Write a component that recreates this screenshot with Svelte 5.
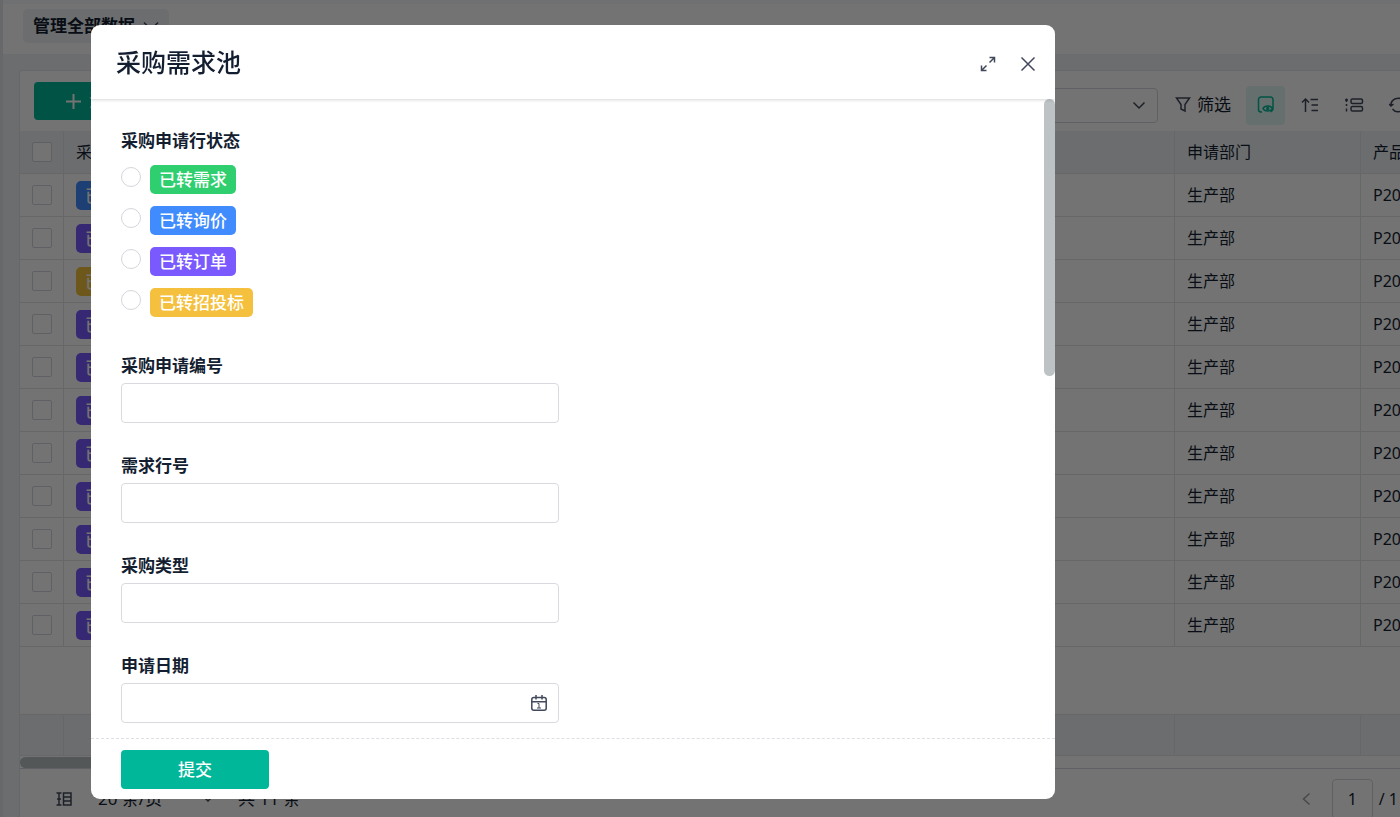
<script lang="ts">
	const statuses = [
		{ value: 'demand', label: '已转需求', color: '#2fcf6f' },
		{ value: 'inquiry', label: '已转询价', color: '#408cff' },
		{ value: 'order', label: '已转订单', color: '#7a5aff' },
		{ value: 'bidding', label: '已转招投标', color: '#f4c03d' }
	];

	const rowStatuses = [1, 2, 3, 2, 2, 2, 2, 2, 2, 2, 2];
	const rows = rowStatuses.map((s, i) => ({ id: i + 1, status: statuses[s] }));

	const fields = [
		{ id: 'request-no', label: '采购申请编号' },
		{ id: 'line-no', label: '需求行号' },
		{ id: 'type', label: '采购类型' }
	];

	let status = $state('');
	let page = $state('1');
</script>

<svelte:head>
	<title>采购需求池</title>
</svelte:head>

<div class="page">
	<header class="topbar">
		<button class="view-switch">
			管理全部数据
			<svg width="16" height="10" viewBox="0 0 16 10"><path d="M1 1.500l7 7 7-7" /></svg>
		</button>
	</header>

	<main>
		<section class="card">
			<div class="toolbar">
				<button class="add">
					<svg width="17" height="17" viewBox="0 0 17 17"><path d="M8.500 1v15M1 8.500h15" /></svg>
					添加
				</button>
				<div class="tools">
					<button class="search-field" aria-label="搜索字段">
						<svg width="14" height="9" viewBox="0 0 14 9"><path d="M1.500 1.500l5.500 5.500 5.500-5.500" /></svg>
					</button>
					<button class="filter">
						<svg width="16" height="18" viewBox="0 0 16 18"><path d="M1.500 2h13L10 8.500V15l-4-2V8.500z" /></svg>
						筛选
					</button>
					<button class="tool active" aria-label="显示字段">
						<svg width="18" height="18" viewBox="0 0 18 18">
							<path d="M5 16H4a2.500 2.500 0 0 1-2.500-2.500v-10A2.500 2.500 0 0 1 4 1h9.500A2.500 2.500 0 0 1 16 3.500V12a4 4 0 0 1-2.500 3.700" />
							<path d="M6 12.500c1.500-3.400 7.500-3.400 9.500 0-2 3.400-8 3.400-9.500 0z" />
							<circle cx="10.700" cy="12.500" r="0.900" />
						</svg>
					</button>
					<button class="tool" aria-label="排序">
						<svg width="18" height="18" viewBox="0 0 18 18"><path d="M4.500 16V3M1 6.500L4.500 3 8 6.500M9.500 3.500H17M10.500 9H17M10.500 14.500H17" /></svg>
					</button>
					<button class="tool" aria-label="行高">
						<svg width="20" height="18" viewBox="0 0 20 18">
							<rect x="7" y="3" width="11.500" height="4.500" rx="1.500" />
							<rect x="7" y="10.500" width="11.500" height="4.500" rx="1.500" />
							<path d="M2.500 2.500v3.500M1 4h3M2.500 8v2M2.500 12.500v3" />
						</svg>
					</button>
					<button class="tool" aria-label="刷新">
						<svg width="18" height="18" viewBox="0 0 18 18"><path d="M2 10a7 7 0 0 1 12.500-5M16 8a7 7 0 0 1-12.500 5M0 8l2 2 2.500-2M18 10l-2-2-2.500 2" /></svg>
					</button>
				</div>
			</div>

			<div class="table-wrap">
				<table>
					<colgroup>
						<col class="c-check" />
						<col class="c-std" />
						<col class="c-std" />
						<col class="c-std" />
						<col class="c-std" />
						<col class="c-date" />
						<col class="c-dept" />
						<col class="c-product" />
					</colgroup>
					<thead>
						<tr>
							<th><input type="checkbox" aria-label="全选" /></th>
							<th>采购申请行状态</th>
							<th></th>
							<th></th>
							<th></th>
							<th></th>
							<th>申请部门</th>
							<th>产品编号</th>
						</tr>
					</thead>
					<tbody>
						{#each rows as row (row.id)}
							<tr>
								<td><input type="checkbox" aria-label="选择第 {row.id} 行" /></td>
								<td><span class="tag" style="background: {row.status.color}">{row.status.label}</span></td>
								<td></td>
								<td></td>
								<td></td>
								<td></td>
								<td>生产部</td>
								<td>P20</td>
							</tr>
						{/each}
						<tr class="blank"><td colspan="8"></td></tr>
					</tbody>
					<tfoot>
						<tr>
							{#each Array(8) as _}
								<td></td>
							{/each}
						</tr>
					</tfoot>
				</table>
			</div>
			<div class="h-scroll"><div class="h-thumb"></div></div>

			<footer class="pager">
				<button class="density" aria-label="列表样式">
					<svg width="16" height="16" viewBox="0 0 16 16">
						<path d="M0.500 2h5M0.500 14h5M3 2v12M1 8h4" />
						<rect x="7.500" y="2" width="7.500" height="12" />
						<path d="M7.500 6H15M7.500 10H15" />
					</svg>
				</button>
				<label class="page-size">
					<select aria-label="每页条数">
						<option>20 条/页</option>
					</select>
					<svg width="12" height="8" viewBox="0 0 12 8"><path d="M1.500 1.500L6 6l4.500-4.500" /></svg>
				</label>
				<span class="total">共 11 条</span>
				<div class="page-nav">
					<button aria-label="上一页">
						<svg width="9" height="14" viewBox="0 0 9 14"><path d="M7.500 1.500L1.500 7l6 5.500" /></svg>
					</button>
					<input type="text" aria-label="页码" bind:value={page} />
					<span>/ 1</span>
				</div>
			</footer>
		</section>
	</main>
</div>

<div class="overlay">
	<div class="modal" role="dialog" aria-modal="true" aria-labelledby="modal-title">
		<header class="modal-head">
			<h1 id="modal-title">采购需求池</h1>
			<button aria-label="全屏">
				<svg width="16" height="16" viewBox="0 0 16 16"><path d="M9.500 1.500h5v5M14 2L9.500 6.500M6.500 14.500h-5v-5M2 14l4.500-4.500" /></svg>
			</button>
			<button aria-label="关闭">
				<svg width="16" height="16" viewBox="0 0 16 16"><path d="M1.500 1.500l13 13M14.500 1.500l-13 13" /></svg>
			</button>
		</header>

		<div class="modal-body">
			<form id="demand-form" class="form">
				<fieldset>
					<legend>采购申请行状态</legend>
					<div class="options">
						{#each statuses as s (s.value)}
							<label class="option">
								<input type="radio" name="status" value={s.value} bind:group={status} />
								<span class="tag" style="background: {s.color}">{s.label}</span>
							</label>
						{/each}
					</div>
				</fieldset>
				{#each fields as field (field.id)}
					<div class="field">
						<label for={field.id}>{field.label}</label>
						<input id={field.id} class="box" type="text" />
					</div>
				{/each}
				<div class="field">
					<label for="date">申请日期</label>
					<div class="box date">
						<input id="date" type="text" />
						<button type="button" aria-label="选择日期">
							<svg width="18" height="18" viewBox="0 0 18 18">
								<rect x="1.800" y="3.500" width="14.400" height="12.700" rx="2" />
								<path d="M1.800 7.800h14.400M6 1v4.500M12 1v4.500" />
								<path class="thin" d="M7.500 9.500H9v4.500M7 14h4" />
							</svg>
						</button>
					</div>
				</div>
			</form>
			<div class="v-scroll"><div class="v-thumb"></div></div>
		</div>

		<footer class="modal-foot">
			<button type="submit" form="demand-form">提交</button>
		</footer>
	</div>
</div>

<style>
	:global(body) {
		margin: 0;
		overflow: hidden;
		font-family: 'Noto Sans', 'Noto Sans CJK SC', sans-serif;
		font-size: 16px;
		line-height: 24px;
		color: #141e31;
	}

	* {
		box-sizing: border-box;
	}

	button,
	input,
	select {
		margin: 0;
		padding: 0;
		font: inherit;
		color: inherit;
		background: none;
		border: 0;
		outline: 0;
	}

	button {
		display: flex;
		align-items: center;
		justify-content: center;
		cursor: pointer;
	}

	svg {
		flex-shrink: 0;
		fill: none;
		stroke: #40485a;
		stroke-width: 1.5;
	}

	input[type='checkbox'],
	input[type='radio'] {
		display: block;
		appearance: none;
		width: 20px;
		height: 20px;
		flex-shrink: 0;
		border: 1px solid #d3d6db;
		background: #fff;
	}

	input[type='checkbox'] {
		border-radius: 2px;
	}

	input[type='radio'] {
		border-radius: 50%;
	}

	input[type='radio']:checked {
		border: 6px solid #00b899;
	}

	.page {
		height: 100vh;
		overflow: hidden;
		background: #eef2f6;
		border-left: 3px solid #e2e6ea;
	}

	.topbar {
		height: 54px;
		padding: 5px 20px;
		background: #fff;
		border-top: 4px solid #f6f8fa;
	}

	.view-switch {
		height: 34px;
		padding: 0 10px;
		gap: 8px;
		font-size: 17px;
		font-weight: 700;
		background: #eef2f6;
		border-radius: 5px;
	}

	main {
		padding: 16px 0 0 16px;
	}

	.card {
		background: #fff;
		border: 1px solid #e0e4e8;
		border-right: 0;
		border-radius: 3px 0 0;
	}

	.toolbar {
		display: flex;
		align-items: center;
		justify-content: space-between;
		height: 60px;
		padding-left: 14px;
	}

	.add {
		width: 120px;
		height: 38px;
		gap: 7px;
		font-size: 17px;
		color: #fff;
		background: #00b899;
		border-radius: 4px;
	}

	.add svg {
		stroke: #fff;
		stroke-width: 2;
	}

	.tools {
		display: flex;
		align-items: center;
		gap: 5px;
		margin: 8px -17px 0 0;
	}

	.search-field {
		justify-content: flex-end;
		width: 300px;
		height: 35px;
		padding-right: 11px;
		border: 1px solid #d3d6db;
		border-radius: 4px;
	}

	.filter {
		gap: 6px;
		margin: 0 10px 0 12px;
		font-size: 17px;
	}

	.tool {
		width: 39px;
		height: 39px;
		border-radius: 4px;
	}

	.tool.active {
		background: #e0f6f1;
	}

	.tool.active svg {
		stroke: #00b899;
	}

	.table-wrap {
		overflow: hidden;
	}

	table {
		width: 1540px;
		table-layout: fixed;
		border-collapse: separate;
		border-spacing: 0;
	}

	.c-check {
		width: 44px;
	}

	.c-std {
		width: 185px;
	}

	.c-date {
		width: 371px;
	}

	.c-dept {
		width: 186px;
	}

	.c-product {
		width: 199px;
	}

	th,
	td {
		height: 43px;
		padding: 0 12px;
		text-align: left;
		font-weight: 400;
		white-space: nowrap;
		border-right: 1px solid #e0e4e8;
		border-bottom: 1px solid #e0e4e8;
	}

	th,
	tfoot td {
		background: #eef2f6;
	}

	.blank td {
		height: 68px;
		border-right: 0;
	}

	tfoot td {
		height: 41px;
	}

	.tag {
		display: inline-block;
		height: 29px;
		padding: 0 9px;
		font-size: 17px;
		font-weight: 500;
		line-height: 30px;
		color: #fff;
		border-radius: 5px;
		vertical-align: middle;
	}

	.h-scroll {
		padding-top: 1px;
		border-bottom: 1px solid #d3d6db;
	}

	.h-thumb {
		width: 60%;
		height: 11px;
		background: #bbc1c4;
		border-radius: 6px;
	}

	.pager {
		display: flex;
		align-items: center;
		height: 60px;
		padding: 0 2px 0 36px;
	}

	.page-size {
		display: flex;
		align-items: center;
		margin: 0 24px 0 26px;
	}

	.page-size select {
		width: 104px;
		font-size: 17px;
		appearance: none;
	}

	.total {
		font-size: 17px;
	}

	.page-nav {
		display: flex;
		align-items: center;
		gap: 6px;
		margin-left: auto;
	}

	.page-nav svg {
		margin-right: 15px;
		stroke: #9aa0aa;
	}

	.page-nav input {
		width: 41px;
		height: 41px;
		text-align: center;
		border: 1px solid #d3d6db;
		border-radius: 4px;
	}

	.overlay {
		position: fixed;
		inset: 0;
		display: flex;
		padding: 25px 345px 18px 91px;
		background: rgba(0, 0, 0, 0.55);
	}

	.modal {
		display: flex;
		flex: 1;
		flex-direction: column;
		min-width: 0;
		overflow: hidden;
		background: #fff;
		border-radius: 9px;
	}

	.modal-head {
		z-index: 1;
		display: flex;
		align-items: center;
		gap: 24px;
		height: 74px;
		padding: 0 19px 0 25px;
		box-shadow: 0 1px 3px rgba(0, 0, 0, 0.16);
	}

	.modal-head button {
		margin-top: 3px;
	}

	h1 {
		flex: 1;
		margin: 0;
		font-size: 25px;
		font-weight: 500;
		line-height: 36px;
	}

	.modal-body {
		display: flex;
		flex: 1;
		min-height: 0;
	}

	.form {
		display: flex;
		flex: 1;
		flex-direction: column;
		gap: 31px;
		padding: 30px;
		overflow: hidden;
	}

	fieldset {
		margin: 0;
		padding: 0;
		border: 0;
	}

	legend,
	.field label {
		display: block;
		padding: 0;
		font-size: 17px;
		font-weight: 700;
	}

	.options {
		display: flex;
		flex-direction: column;
		gap: 12px;
		padding: 12px 0 6px;
	}

	.option {
		display: flex;
		align-items: flex-start;
		gap: 9px;
	}

	.option input {
		margin-top: 2px;
	}

	.field {
		display: flex;
		flex-direction: column;
		gap: 5px;
		width: calc(50% - 9px);
	}

	.box {
		height: 40px;
		padding: 0 10px;
		border: 1px solid #d8dade;
		border-radius: 4px;
	}

	.date {
		display: flex;
		align-items: center;
	}

	.date input {
		flex: 1;
	}

	.thin {
		stroke-width: 1;
	}

	.v-scroll {
		width: 11px;
	}

	.v-thumb {
		height: 277px;
		background: #bdc3c4;
		border-radius: 6px;
	}

	.modal-foot {
		padding: 11px 30px 10px;
		border-top: 1px dashed #dcdfe3;
	}

	.modal-foot button {
		width: 148px;
		height: 39px;
		font-size: 17px;
		font-weight: 500;
		color: #fff;
		background: #00b899;
		border-radius: 4px;
	}
</style>
